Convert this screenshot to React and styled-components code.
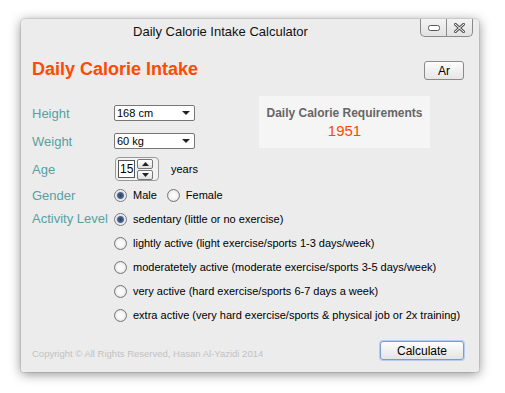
import styled, { createGlobalStyle } from "styled-components";

const GlobalStyle = createGlobalStyle`
  html, body {
    margin: 0;
    padding: 0;
    background: #ffffff;
  }
  body {
    font-family: "Liberation Sans", "DejaVu Sans", sans-serif;
    font-size: 11px;
    color: #000;
  }
`;

const activities = [
  "sedentary (little or no exercise)",
  "lightly active (light exercise/sports 1-3 days/week)",
  "moderatetely active (moderate exercise/sports 3-5 days/week)",
  "very active (hard exercise/sports 6-7 days a week)",
  "extra active (very hard exercise/sports & physical job or 2x training)",
];

function App() {
  return (
    <Page>
      <GlobalStyle />
      <Window>
        <TitleBar>
          <Title>Daily Calorie Intake Calculator</Title>
          <Controls>
            <CtrlButton>
              <svg width="12" height="6" viewBox="0 0 12 6">
                <rect x="0.5" y="0.5" width="11" height="5" rx="2" fill="#fff" stroke="#555" />
              </svg>
            </CtrlButton>
            <CtrlButton $last>
              <svg width="11" height="10" viewBox="0 0 11 10">
                <path d="M1 1 L10 9 M10 1 L1 9" stroke="#555" strokeWidth="3" strokeLinecap="round" />
                <path d="M1 1 L10 9 M10 1 L1 9" stroke="#fff" strokeWidth="1" strokeLinecap="round" />
              </svg>
            </CtrlButton>
          </Controls>
        </TitleBar>

        <Body>
          <HeaderRow>
            <Heading>Daily Calorie Intake</Heading>
            <SmallButton>Ar</SmallButton>
          </HeaderRow>

          <TopSection>
            <FormColumn>
              <Row $h={28}>
                <Label>Height</Label>
                <Select>
                  <span>168 cm</span>
                  <Arrow />
                </Select>
              </Row>
              <Row $h={28}>
                <Label>Weight</Label>
                <Select>
                  <span>60 kg</span>
                  <Arrow />
                </Select>
              </Row>
              <Row $h={28}>
                <Label>Age</Label>
                <Spinner>
                  <SpinInput>15</SpinInput>
                  <SpinButtons>
                    <SpinBtn>
                      <svg width="7" height="4" viewBox="0 0 7 4">
                        <path d="M0 4 L3.5 0 L7 4 Z" fill="#222" />
                      </svg>
                    </SpinBtn>
                    <SpinBtn>
                      <svg width="7" height="4" viewBox="0 0 7 4">
                        <path d="M0 0 L7 0 L3.5 4 Z" fill="#222" />
                      </svg>
                    </SpinBtn>
                  </SpinButtons>
                </Spinner>
                <Years>years</Years>
              </Row>
            </FormColumn>
            <Results>
              <ResultTitle>Daily Calorie Requirements</ResultTitle>
              <ResultValue>1951</ResultValue>
            </Results>
          </TopSection>

          <Row $h={24}>
            <Label>Gender</Label>
            <Option $gap={10}>
              <Radio $checked />
              <span>Male</span>
            </Option>
            <Option>
              <Radio />
              <span>Female</span>
            </Option>
          </Row>

          <ActivityRow>
            <Label $lh={24}>Activity Level</Label>
            <ActivityList>
              {activities.map((a, i) => (
                <Option key={i}>
                  <Radio $checked={i === 0} />
                  <span>{a}</span>
                </Option>
              ))}
            </ActivityList>
          </ActivityRow>

          <Footer>
            <Copyright>Copyright © All Rights Reserved, Hasan Al-Yazidi 2014</Copyright>
            <CalcButton>Calculate</CalcButton>
          </Footer>
        </Body>
      </Window>
    </Page>
  );
}

export default App;

const Page = styled.div`
  width: 505px;
  height: 393px;
  padding: 19px 0 0 21px;
  box-sizing: border-box;
`;

const Window = styled.div`
  width: 458px;
  height: 353px;
  background: #ececec;
  border-radius: 4px 4px 2px 2px;
  box-shadow: 0 2px 12px rgba(0, 0, 0, 0.45), 0 0 0 1px rgba(0, 0, 0, 0.08);
  display: flex;
  flex-direction: column;
`;

const TitleBar = styled.div`
  display: flex;
  align-items: flex-start;
  height: 24px;
`;

const Title = styled.div`
  flex: 1;
  text-align: center;
  font-size: 13px;
  line-height: 25px;
  color: #111;
`;

const Controls = styled.div`
  display: flex;
  margin-right: 6px;
  border: 1px solid #8a8a8a;
  border-top: none;
  border-radius: 0 0 5px 5px;
  background: linear-gradient(#f4f4f4, #e2e2e2);
  overflow: hidden;
`;

const CtrlButton = styled.div`
  width: 25px;
  height: 17px;
  display: flex;
  align-items: center;
  justify-content: center;
  border-right: ${(p) => (p.$last ? "none" : "1px solid #8a8a8a")};
`;

const Body = styled.div`
  flex: 1;
  display: flex;
  flex-direction: column;
  padding: 0 15px 12px 11px;
`;

const HeaderRow = styled.div`
  display: flex;
  justify-content: space-between;
  align-items: center;
  margin-top: 15px;
`;

const Heading = styled.div`
  font-size: 18px;
  font-weight: bold;
  color: #ff4a00;
`;

const SmallButton = styled.div`
  width: 38px;
  height: 17px;
  border: 1px solid #8a8a8a;
  border-radius: 3px;
  background: linear-gradient(#fcfcfc, #e6e6e6);
  display: flex;
  align-items: center;
  justify-content: center;
  font-size: 12px;
  margin-top: 3px;
`;

const TopSection = styled.div`
  display: flex;
  align-items: flex-start;
  margin-top: 19px;
`;

const FormColumn = styled.div`
  display: flex;
  flex-direction: column;
  width: 227px;
`;

const Row = styled.div`
  display: flex;
  align-items: center;
  height: ${(p) => p.$h}px;
`;

const Label = styled.div`
  width: 82px;
  flex-shrink: 0;
  font-size: 13px;
  line-height: ${(p) => (p.$lh ? `${p.$lh}px` : "normal")};
  color: #58a0a0;
`;

const Select = styled.div`
  width: 77px;
  height: 14px;
  border: 1px solid #777;
  border-radius: 2px;
  background: #fff;
  display: flex;
  align-items: center;
  justify-content: space-between;
  padding: 0 0 0 2px;
  font-size: 11px;
`;

const Arrow = styled.div`
  width: 0;
  height: 0;
  border-left: 4px solid transparent;
  border-right: 4px solid transparent;
  border-top: 4px solid #222;
  margin-right: 4px;
`;

const Spinner = styled.div`
  display: flex;
  align-items: center;
  gap: 2px;
  width: 38px;
  height: 22px;
  padding: 0 2px;
  border: 1px solid #999;
  border-radius: 4px;
  background: #f2f2f2;
  margin-left: 1px;
`;

const SpinInput = styled.div`
  width: 14px;
  height: 16px;
  border: 1px solid #555;
  background: #fff;
  font-size: 12px;
  line-height: 16px;
  padding-left: 1px;
`;

const SpinButtons = styled.div`
  display: flex;
  flex-direction: column;
  gap: 1px;
`;

const SpinBtn = styled.div`
  width: 14px;
  height: 8px;
  border: 1px solid #777;
  border-radius: 2px;
  background: linear-gradient(#fff, #e0e0e0);
  display: flex;
  align-items: center;
  justify-content: center;
`;

const Years = styled.span`
  margin-left: 12px;
  font-size: 11px;
`;

const Results = styled.div`
  margin-top: -3px;
  width: 171px;
  height: 52px;
  background: #f5f5f5;
  display: flex;
  flex-direction: column;
  align-items: center;
  justify-content: center;
  gap: 2px;
`;

const ResultTitle = styled.div`
  font-size: 12px;
  font-weight: bold;
  color: #666;
`;

const ResultValue = styled.div`
  font-size: 15px;
  color: #ff4a00;
`;

const Option = styled.div`
  display: flex;
  align-items: center;
  gap: 6px;
  margin-right: ${(p) => p.$gap || 0}px;
  font-size: 11px;
  height: 24px;
`;

const Radio = styled.span`
  width: 11px;
  height: 11px;
  border-radius: 50%;
  border: 1px solid #777;
  background: ${(p) =>
    p.$checked
      ? "radial-gradient(circle, #2a3c5c 0, #506890 3px, #dde4ee 4px, #fdfdfd 6px)"
      : "radial-gradient(circle, #ffffff 0, #f4f4f4 4px, #d8d8d8 6px)"};
  flex-shrink: 0;
`;

const ActivityRow = styled.div`
  display: flex;
  align-items: flex-start;
`;

const ActivityList = styled.div`
  display: flex;
  flex-direction: column;
`;

const Footer = styled.div`
  margin-top: auto;
  display: flex;
  justify-content: space-between;
  align-items: flex-end;
`;

const Copyright = styled.div`
  font-size: 9.5px;
  color: #c2c2c2;
  margin-bottom: 1px;
`;

const CalcButton = styled.div`
  width: 82px;
  height: 17px;
  border: 1px solid #7a9ad8;
  box-shadow: 0 0 0 1px #b8ccf0;
  border-radius: 3px;
  background: linear-gradient(#fdfdfd, #e4e4e4);
  display: flex;
  align-items: center;
  justify-content: center;
  font-size: 12px;
`;
